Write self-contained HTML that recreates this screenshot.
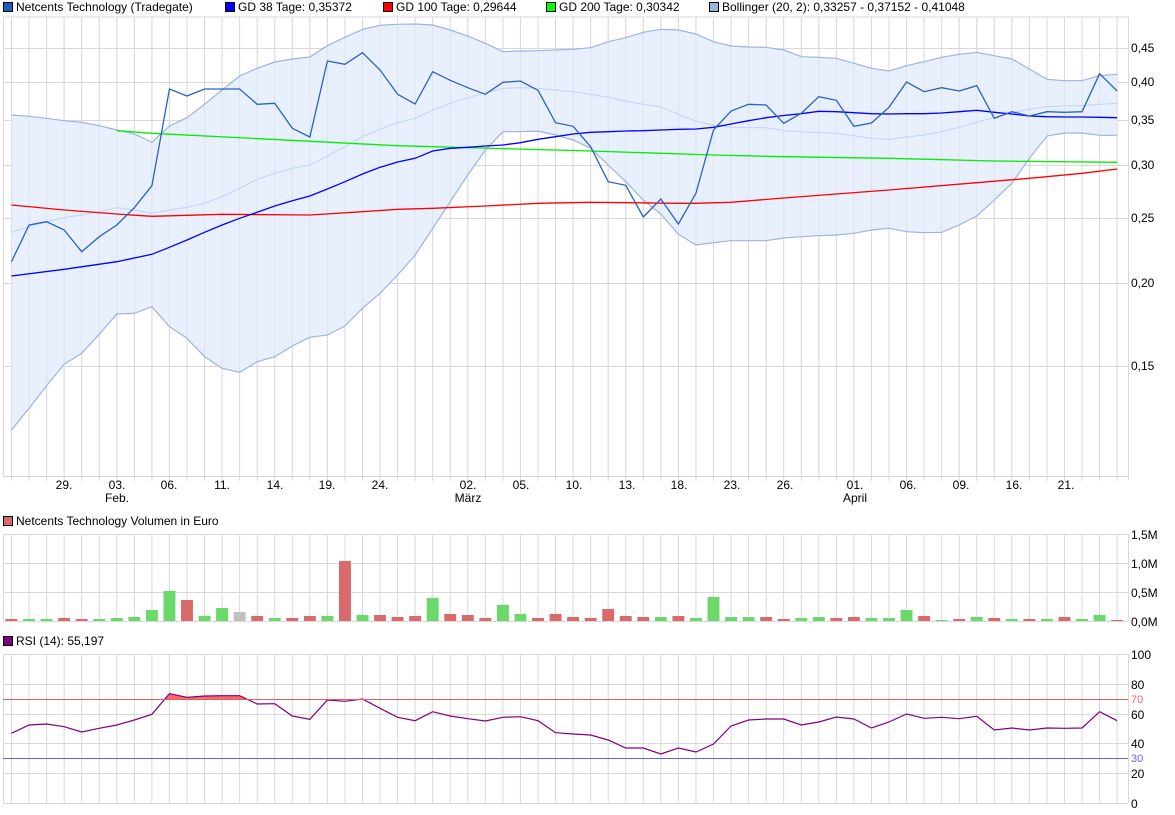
<!DOCTYPE html>
<html><head><meta charset="utf-8"><style>
html,body{margin:0;padding:0;background:#fff;width:1175px;height:815px;overflow:hidden}
svg{display:block}
text{font-family:"Liberation Sans",sans-serif;font-size:12px;fill:#000}
.g line{stroke:#d9d9d9;stroke-width:1}
.s{vector-effect:non-scaling-stroke;fill:none}
</style></head><body>
<svg width="1175" height="815" viewBox="0 0 1175 815">
<defs>
<g id="vg">
<path class="s" stroke="#d9d9d9" stroke-width="1" d="M0,0V1M1,0V1M2,0V1M3,0V1M4,0V1M5,0V1M6,0V1M7,0V1M8,0V1M9,0V1M10,0V1M11,0V1M12,0V1M13,0V1M14,0V1M15,0V1M16,0V1M17,0V1M18,0V1M19,0V1M20,0V1M21,0V1M22,0V1M23,0V1M24,0V1M25,0V1M26,0V1M27,0V1M28,0V1M29,0V1M30,0V1M31,0V1M32,0V1M33,0V1M34,0V1M35,0V1M36,0V1M37,0V1M38,0V1M39,0V1M40,0V1M41,0V1M42,0V1M43,0V1M44,0V1M45,0V1M46,0V1M47,0V1M48,0V1M49,0V1M50,0V1M51,0V1M52,0V1M53,0V1M54,0V1M55,0V1M56,0V1M57,0V1M58,0V1M59,0V1M60,0V1M61,0V1M62,0V1M63,0V1"/>
</g>
</defs>

<!-- legends -->
<rect x="3.5" y="2.5" width="9" height="9" fill="#1f5bbf" stroke="#000"/>
<text x="16" y="11">Netcents Technology (Tradegate)</text>
<rect x="225.5" y="2.5" width="9" height="9" fill="#0000ff" stroke="#000"/>
<text x="238" y="11">GD 38 Tage: 0,35372</text>
<rect x="383.5" y="2.5" width="9" height="9" fill="#ff0000" stroke="#000"/>
<text x="396" y="11">GD 100 Tage: 0,29644</text>
<rect x="546.5" y="2.5" width="9" height="9" fill="#00ff00" stroke="#000"/>
<text x="559" y="11">GD 200 Tage: 0,30342</text>
<rect x="709.5" y="2.5" width="9" height="9" fill="#9db3e3" stroke="#000"/>
<text x="722" y="11">Bollinger (20, 2): 0,33257 - 0,37152 - 0,41048</text>

<rect x="3.5" y="516.5" width="9" height="9" fill="#d9696a" stroke="#000"/>
<text x="16" y="525">Netcents Technology Volumen in Euro</text>
<rect x="3.5" y="636.5" width="9" height="9" fill="#800080" stroke="#000"/>
<text x="16" y="645">RSI (14): 55,197</text>

<!-- main grid -->
<g class="g">
<line x1="3" y1="17" x2="1128" y2="17"/><line x1="3" y1="48.5" x2="1128" y2="48.5"/><line x1="3" y1="82.5" x2="1128" y2="82.5"/><line x1="3" y1="120.5" x2="1128" y2="120.5"/><line x1="3" y1="165.5" x2="1128" y2="165.5"/><line x1="3" y1="218.5" x2="1128" y2="218.5"/><line x1="3" y1="283.5" x2="1128" y2="283.5"/><line x1="3" y1="366.5" x2="1128" y2="366.5"/><line x1="3" y1="476.5" x2="1128" y2="476.5"/>
<line x1="3.5" y1="17" x2="3.5" y2="476"/><line x1="1128.5" y1="17" x2="1128.5" y2="480"/>
<line x1="3" y1="534.5" x2="1128" y2="534.5"/><line x1="3" y1="563.5" x2="1128" y2="563.5"/><line x1="3" y1="592.5" x2="1128" y2="592.5"/><line x1="3" y1="621.5" x2="1128" y2="621.5"/>
<line x1="3.5" y1="534" x2="3.5" y2="621"/><line x1="1128.5" y1="534" x2="1128.5" y2="621"/>
<line x1="3" y1="654.5" x2="1128" y2="654.5"/><line x1="3" y1="684.5" x2="1128" y2="684.5"/><line x1="3" y1="714.5" x2="1128" y2="714.5"/><line x1="3" y1="743.5" x2="1128" y2="743.5"/><line x1="3" y1="773.5" x2="1128" y2="773.5"/><line x1="3" y1="803.5" x2="1128" y2="803.5"/>
<line x1="3.5" y1="654" x2="3.5" y2="803"/><line x1="1128.5" y1="654" x2="1128.5" y2="803"/>
</g>

<g transform="translate(11.5,0) scale(17.55,1)">
<use href="#vg" transform="translate(0,17) scale(1,464)"/>
<use href="#vg" transform="translate(0,534) scale(1,88)"/>
<use href="#vg" transform="translate(0,654) scale(1,150)"/>

<!-- bollinger band -->
<polygon fill="#e9f0fd" points="0,115 1,116.3 2,118.3 3,120.7 4,122.3 5,125.7 6,130 7,134 8,142.3 9,126 10,117.7 11,104.3 12,90 13,76 14,68.3 15,62 16,59 17,57 18,45.7 19,37.3 20,29.3 21,25.3 22,24.3 23,24 24,25 25,30 26,36 27,43.3 28,51.7 29,51 30,50.7 31,50 32,49.3 33,47.7 34,41.7 35,37.7 36,32.3 37,29.3 38,30 39,34 40,41.7 41,46 42,47 43,47.3 44,50 45,56.7 46,57.3 47,58.3 48,63.3 49,68.3 50,71 51,65.7 52,61.7 53,57.3 54,54.3 55,52.3 56,55.7 57,59 58,69 59,79.3 60,80.7 61,80.7 62,75.7 63,74.3 63,135.3 62,135.3 61,133 60,133 59,136 58,158.3 57,183.3 56,200 55,216 54,225 53,232.3 52,232.7 51,231.7 50,228.3 49,230 48,233.3 47,235 46,235.7 45,236.7 44,238 43,240.7 42,240.7 41,240.7 40,242.7 39,245 38,234.3 37,214 36,200 35,181.7 34,165 33,148.3 32,140 31,135 30,131 29,131.7 28,131.7 27,150 26,175 25,201.7 24,228.3 23,255 22,275 21,293.3 20,308.3 19,326 18,335 17,337.3 16,346 15,356.7 14,361.7 13,372.3 12,368.3 11,356.7 10,338.3 9,326.7 8,306.7 7,313.3 6,314 5,334.3 4,353.3 3,364.3 2,385.7 1,408.3 0,430"/>
<!-- regrid over band (grid visible through) -->
<use href="#vg" transform="translate(0,17) scale(1,459)" opacity="0.6"/>
<polyline class="s" stroke="#9db3e3" stroke-width="1.2" points="0,115 1,116.3 2,118.3 3,120.7 4,122.3 5,125.7 6,130 7,134 8,142.3 9,126 10,117.7 11,104.3 12,90 13,76 14,68.3 15,62 16,59 17,57 18,45.7 19,37.3 20,29.3 21,25.3 22,24.3 23,24 24,25 25,30 26,36 27,43.3 28,51.7 29,51 30,50.7 31,50 32,49.3 33,47.7 34,41.7 35,37.7 36,32.3 37,29.3 38,30 39,34 40,41.7 41,46 42,47 43,47.3 44,50 45,56.7 46,57.3 47,58.3 48,63.3 49,68.3 50,71 51,65.7 52,61.7 53,57.3 54,54.3 55,52.3 56,55.7 57,59 58,69 59,79.3 60,80.7 61,80.7 62,75.7 63,74.3"/>
<polyline class="s" stroke="#9db3e3" stroke-width="1.2" points="63,135.3 62,135.3 61,133 60,133 59,136 58,158.3 57,183.3 56,200 55,216 54,225 53,232.3 52,232.7 51,231.7 50,228.3 49,230 48,233.3 47,235 46,235.7 45,236.7 44,238 43,240.7 42,240.7 41,240.7 40,242.7 39,245 38,234.3 37,214 36,200 35,181.7 34,165 33,148.3 32,140 31,135 30,131 29,131.7 28,131.7 27,150 26,175 25,201.7 24,228.3 23,255 22,275 21,293.3 20,308.3 19,326 18,335 17,337.3 16,346 15,356.7 14,361.7 13,372.3 12,368.3 11,356.7 10,338.3 9,326.7 8,306.7 7,313.3 6,314 5,334.3 4,353.3 3,364.3 2,385.7 1,408.3 0,430"/>
<polyline class="s" stroke="#c5d6f7" stroke-width="1.2" points="0,232.3 1,226.7 2,221.7 3,217.7 4,215 5,211.7 6,207.7 7,210 8,213.3 9,210 10,207.3 11,203.3 12,196.7 13,188.3 14,179.3 15,173.3 16,168.3 17,165 18,156 19,146.7 20,136.7 21,129.3 22,122.7 23,118.3 24,110 25,103.3 26,97.7 27,92.7 28,88.3 29,87.7 30,88.3 31,90 32,91.7 33,94.3 34,97.3 35,101 36,104.3 37,107 38,114.3 39,121 40,125 41,127.3 42,127.7 43,127.7 44,130.5 45,131.7 46,132.7 47,133.3 48,135.7 49,138.3 50,139.3 51,137 52,135 53,131.7 54,127.3 55,122.3 56,117.3 57,112.7 58,109.3 59,106.7 60,105.7 61,105.7 62,104.3 63,103.3"/>
<!-- GD100 red -->
<polyline class="s" stroke="#ff0000" stroke-width="1.3" points="0,205 3,210 6,214 8,216.3 12,214.3 17,215 20,211.7 22,209.3 24,208.3 27,206 30,203.3 33,202.3 38,203.3 39,203.3 41,202.3 44,198 50,190 55,182.7 58,178.3 61,173.3 63,169"/>
<!-- GD200 green -->
<polyline class="s" stroke="#00ee00" stroke-width="1.3" points="6,130.7 8,133.3 22,145.7 33,151 40,155 44,156.7 50,158.3 56,161 63,162.3"/>
<!-- GD38 blue -->
<polyline class="s" stroke="#0000ff" stroke-width="1.3" points="0,276 3,269.3 6,261.7 8,254.3 9,247.3 10,240 11,232.3 12,225 13,218.3 14,212.3 15,206 16,200.7 17,196 18,189 19,181.7 20,174 21,167.3 22,162 23,158.3 24,151 25,148.3 26,147.3 27,146 28,145 29,142.7 30,139.3 31,136.7 32,134 33,132.3 34,131.7 35,131 36,130.7 37,130 38,129.3 39,129 40,127.3 41,124 42,120.7 43,117.7 44,115.5 45,113.7 46,111.3 47,111.7 48,112.7 49,113.7 50,114 51,113.7 52,113.7 53,113 54,111.7 55,110.3 56,112.3 57,114 58,116 59,116.7 60,117 61,117 62,117.3 63,117.7"/>
<!-- price -->
<polyline class="s" stroke="#2a62c0" stroke-width="1.3" points="0,261.7 1,225 2,221.7 3,230 4,251.7 5,236.7 6,225 7,207.7 8,185.7 9,89 10,96 11,89 12,89 13,89 14,104.3 15,103.3 16,128.3 17,137 18,61 19,64.3 20,52.7 21,70 22,94.3 23,104 24,71.7 25,80.3 26,87.7 27,94.3 28,82.3 29,81 30,90.3 31,122.7 32,126.3 33,146.7 34,181.7 35,185.3 36,217 37,199 38,224 39,193.3 40,130 41,111 42,104.3 43,105 44,123.3 45,113.3 46,96.7 47,100.3 48,126.3 49,123 50,107.3 51,82 52,91.7 53,87.7 54,91 55,85.7 56,118.3 57,111.7 58,116 59,111.7 60,112.3 61,111.7 62,73.7 63,91"/>

<!-- volume bars -->
<g>
<rect x="-0.34" y="619" width="0.68" height="2" fill="#d9696a"/>
<rect x="0.66" y="619" width="0.68" height="2" fill="#6ad96a"/>
<rect x="1.66" y="619" width="0.68" height="2" fill="#6ad96a"/>
<rect x="2.66" y="618" width="0.68" height="3" fill="#d9696a"/>
<rect x="3.66" y="619" width="0.68" height="2" fill="#d9696a"/>
<rect x="4.66" y="619" width="0.68" height="2" fill="#6ad96a"/>
<rect x="5.66" y="618" width="0.68" height="3" fill="#6ad96a"/>
<rect x="6.66" y="617" width="0.68" height="4" fill="#6ad96a"/>
<rect x="7.66" y="610" width="0.68" height="11" fill="#6ad96a"/>
<rect x="8.66" y="591" width="0.68" height="30" fill="#6ad96a"/>
<rect x="9.66" y="600" width="0.68" height="21" fill="#d9696a"/>
<rect x="10.66" y="616" width="0.68" height="5" fill="#6ad96a"/>
<rect x="11.66" y="608" width="0.68" height="13" fill="#6ad96a"/>
<rect x="12.66" y="612" width="0.68" height="9" fill="#c0c0c0"/>
<rect x="13.66" y="616" width="0.68" height="5" fill="#d9696a"/>
<rect x="14.66" y="618" width="0.68" height="3" fill="#6ad96a"/>
<rect x="15.66" y="618" width="0.68" height="3" fill="#d9696a"/>
<rect x="16.66" y="616" width="0.68" height="5" fill="#d9696a"/>
<rect x="17.66" y="616" width="0.68" height="5" fill="#6ad96a"/>
<rect x="18.66" y="561" width="0.68" height="60" fill="#d9696a"/>
<rect x="19.66" y="615" width="0.68" height="6" fill="#6ad96a"/>
<rect x="20.66" y="615" width="0.68" height="6" fill="#d9696a"/>
<rect x="21.66" y="617" width="0.68" height="4" fill="#d9696a"/>
<rect x="22.66" y="616" width="0.68" height="5" fill="#d9696a"/>
<rect x="23.66" y="598" width="0.68" height="23" fill="#6ad96a"/>
<rect x="24.66" y="614" width="0.68" height="7" fill="#d9696a"/>
<rect x="25.66" y="615" width="0.68" height="6" fill="#d9696a"/>
<rect x="26.66" y="618" width="0.68" height="3" fill="#d9696a"/>
<rect x="27.66" y="605" width="0.68" height="16" fill="#6ad96a"/>
<rect x="28.66" y="614" width="0.68" height="7" fill="#6ad96a"/>
<rect x="29.66" y="618" width="0.68" height="3" fill="#d9696a"/>
<rect x="30.66" y="614" width="0.68" height="7" fill="#d9696a"/>
<rect x="31.66" y="617" width="0.68" height="4" fill="#d9696a"/>
<rect x="32.66" y="618" width="0.68" height="3" fill="#d9696a"/>
<rect x="33.66" y="609" width="0.68" height="12" fill="#d9696a"/>
<rect x="34.66" y="616" width="0.68" height="5" fill="#d9696a"/>
<rect x="35.66" y="617" width="0.68" height="4" fill="#d9696a"/>
<rect x="36.66" y="617" width="0.68" height="4" fill="#6ad96a"/>
<rect x="37.66" y="616" width="0.68" height="5" fill="#d9696a"/>
<rect x="38.66" y="618" width="0.68" height="3" fill="#6ad96a"/>
<rect x="39.66" y="597" width="0.68" height="24" fill="#6ad96a"/>
<rect x="40.66" y="617" width="0.68" height="4" fill="#6ad96a"/>
<rect x="41.66" y="617" width="0.68" height="4" fill="#6ad96a"/>
<rect x="42.66" y="617" width="0.68" height="4" fill="#d9696a"/>
<rect x="43.66" y="619" width="0.68" height="2" fill="#d9696a"/>
<rect x="44.66" y="618" width="0.68" height="3" fill="#6ad96a"/>
<rect x="45.66" y="617" width="0.68" height="4" fill="#6ad96a"/>
<rect x="46.66" y="618" width="0.68" height="3" fill="#d9696a"/>
<rect x="47.66" y="617" width="0.68" height="4" fill="#d9696a"/>
<rect x="48.66" y="618" width="0.68" height="3" fill="#6ad96a"/>
<rect x="49.66" y="618" width="0.68" height="3" fill="#6ad96a"/>
<rect x="50.66" y="610" width="0.68" height="11" fill="#6ad96a"/>
<rect x="51.66" y="616" width="0.68" height="5" fill="#d9696a"/>
<rect x="52.66" y="620" width="0.68" height="1" fill="#6ad96a"/>
<rect x="53.66" y="619" width="0.68" height="2" fill="#d9696a"/>
<rect x="54.66" y="617" width="0.68" height="4" fill="#6ad96a"/>
<rect x="55.66" y="618" width="0.68" height="3" fill="#d9696a"/>
<rect x="56.66" y="619" width="0.68" height="2" fill="#6ad96a"/>
<rect x="57.66" y="619" width="0.68" height="2" fill="#d9696a"/>
<rect x="58.66" y="619" width="0.68" height="2" fill="#6ad96a"/>
<rect x="59.66" y="617" width="0.68" height="4" fill="#d9696a"/>
<rect x="60.66" y="619" width="0.68" height="2" fill="#6ad96a"/>
<rect x="61.66" y="615" width="0.68" height="6" fill="#6ad96a"/>
<rect x="62.66" y="620" width="0.68" height="1" fill="#d9696a"/>
</g>

<!-- RSI -->
<polygon fill="#ff6666" points="8.74,699 9,693.7 10,697.3 11,696 12,695.7 13,695.7 13.4,699"/>
<polyline class="s" stroke="#800080" stroke-width="1.2" points="0,733.3 1,725 2,724 3,726.7 4,732 5,728.3 6,725 7,720 8,714.3 9,693.7 10,697.3 11,696 12,695.7 13,695.7 14,704 15,703.7 16,716 17,719.3 18,700 19,701.3 20,699 21,708.3 22,717.3 23,720.7 24,711.7 25,716 26,718.7 27,721 28,717.3 29,716.7 30,720.7 31,732.7 32,734 33,735 34,740 35,748 36,748 37,754 38,748 39,752 40,744 41,726 42,720 43,719 44,719 45,725 46,722 47,717 48,719 49,728 50,722 51,714 52,718.3 53,717.3 54,718.7 55,716.3 56,730 57,728 58,730 59,728 60,728.3 61,728 62,711.7 63,720.7"/>
</g>
<line x1="3" y1="699.5" x2="1128" y2="699.5" stroke="#e06060"/>
<line x1="3" y1="758.5" x2="1128" y2="758.5" stroke="#6060ff"/>

<!-- right axis labels -->
<text x="1131" y="52">0,45</text>
<text x="1131" y="86">0,40</text>
<text x="1131" y="124">0,35</text>
<text x="1131" y="169">0,30</text>
<text x="1131" y="222">0,25</text>
<text x="1131" y="287">0,20</text>
<text x="1131" y="370">0,15</text>
<text x="1131" y="539">1,5M</text>
<text x="1131" y="568">1,0M</text>
<text x="1131" y="597">0,5M</text>
<text x="1131" y="626">0,0M</text>
<text x="1131" y="659">100</text>
<text x="1131" y="689">80</text>
<text x="1131" y="703" style="fill:#ff6666;font-size:11px">70</text>
<text x="1131" y="719">60</text>
<text x="1131" y="748">40</text>
<text x="1131" y="762" style="fill:#6666ff;font-size:11px">30</text>
<text x="1131" y="778">20</text>
<text x="1131" y="808">0</text>

<!-- date labels -->
<g text-anchor="middle">
<text x="64" y="489">29.</text>
<text x="117" y="489">03.</text><text x="117" y="502">Feb.</text>
<text x="169" y="489">06.</text>
<text x="222" y="489">11.</text>
<text x="275" y="489">14.</text>
<text x="327" y="489">19.</text>
<text x="380" y="489">24.</text>
<text x="468" y="489">02.</text><text x="468" y="502">März</text>
<text x="521" y="489">05.</text>
<text x="574" y="489">10.</text>
<text x="627" y="489">13.</text>
<text x="679" y="489">18.</text>
<text x="732" y="489">23.</text>
<text x="785" y="489">26.</text>
<text x="855" y="489">01.</text><text x="855" y="502">April</text>
<text x="908" y="489">06.</text>
<text x="961" y="489">09.</text>
<text x="1014" y="489">16.</text>
<text x="1066" y="489">21.</text>
</g>
</svg>
</body></html>
